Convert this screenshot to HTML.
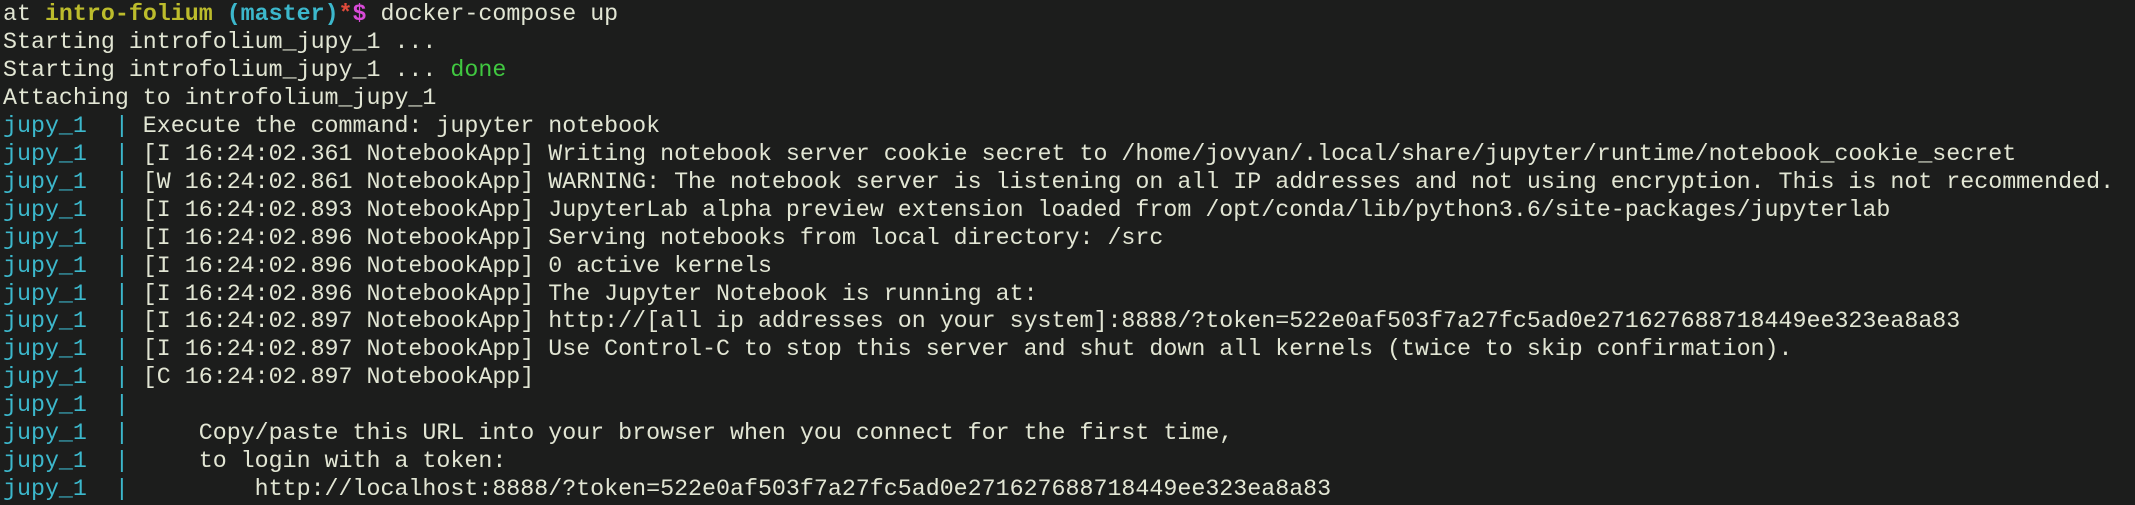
<!DOCTYPE html>
<html><head><meta charset="utf-8"><style>
html,body{margin:0;padding:0;background:#1c1d1c;width:2135px;height:505px;overflow:hidden}
pre{margin:0;padding:1px 0 0 3px;font-family:"Liberation Mono",monospace;font-size:23.3px;line-height:27.95px;color:#e2e6d4;white-space:pre}
.c{color:#3cb8cc}.y{color:#bcbc2c;font-weight:bold}.b{color:#3cb8cc;font-weight:bold}.r{color:#e04a3a;font-weight:bold}.m{color:#d84ad8;font-weight:bold}.g{color:#40c840}
</style></head><body><pre>at <span class="y">intro-folium</span> <span class="b">(master)</span><span class="r">*</span><span class="m">$</span> docker-compose up
Starting introfolium_jupy_1 ...
Starting introfolium_jupy_1 ... <span class="g">done</span>
Attaching to introfolium_jupy_1
<span class="c">jupy_1  |</span> Execute the command: jupyter notebook
<span class="c">jupy_1  |</span> [I 16:24:02.361 NotebookApp] Writing notebook server cookie secret to /home/jovyan/.local/share/jupyter/runtime/notebook_cookie_secret
<span class="c">jupy_1  |</span> [W 16:24:02.861 NotebookApp] WARNING: The notebook server is listening on all IP addresses and not using encryption. This is not recommended.
<span class="c">jupy_1  |</span> [I 16:24:02.893 NotebookApp] JupyterLab alpha preview extension loaded from /opt/conda/lib/python3.6/site-packages/jupyterlab
<span class="c">jupy_1  |</span> [I 16:24:02.896 NotebookApp] Serving notebooks from local directory: /src
<span class="c">jupy_1  |</span> [I 16:24:02.896 NotebookApp] 0 active kernels
<span class="c">jupy_1  |</span> [I 16:24:02.896 NotebookApp] The Jupyter Notebook is running at:
<span class="c">jupy_1  |</span> [I 16:24:02.897 NotebookApp] http://[all ip addresses on your system]:8888/?token=522e0af503f7a27fc5ad0e271627688718449ee323ea8a83
<span class="c">jupy_1  |</span> [I 16:24:02.897 NotebookApp] Use Control-C to stop this server and shut down all kernels (twice to skip confirmation).
<span class="c">jupy_1  |</span> [C 16:24:02.897 NotebookApp]
<span class="c">jupy_1  |</span>
<span class="c">jupy_1  |</span>     Copy/paste this URL into your browser when you connect for the first time,
<span class="c">jupy_1  |</span>     to login with a token:
<span class="c">jupy_1  |</span>         http://localhost:8888/?token=522e0af503f7a27fc5ad0e271627688718449ee323ea8a83
</pre></body></html>
